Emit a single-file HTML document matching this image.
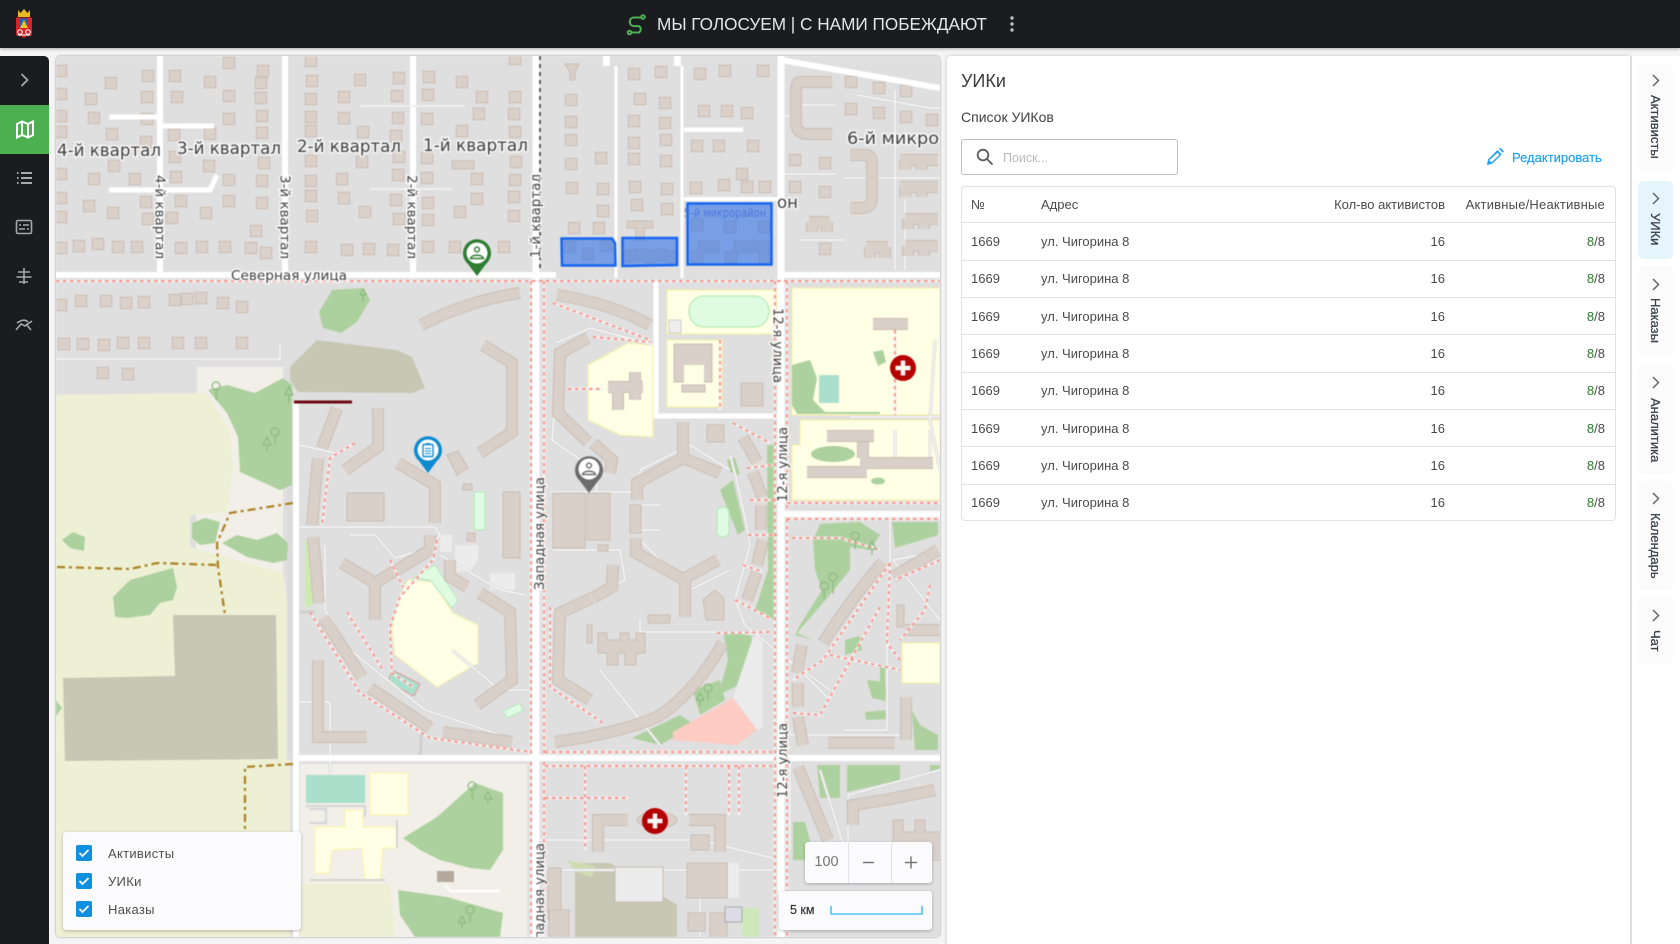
<!DOCTYPE html>
<html lang="ru"><head><meta charset="utf-8"><title>УИКи</title>
<style>
html,body{margin:0;padding:0;width:1680px;height:944px;overflow:hidden;background:#f4f4f4;font-family:"Liberation Sans",sans-serif;color:#444}
.a{position:absolute}
#top{left:0;top:0;width:1680px;height:48px;background:#1a1c1f;box-shadow:0 1px 3px rgba(0,0,0,.3)}
#side{left:0;top:56px;width:49px;height:888px;background:#1a1c1f;border-top-right-radius:5px}
#map{left:56px;top:56px;width:884px;height:881px;overflow:hidden;border-radius:4px;box-shadow:0 0 2px rgba(0,0,0,.4)}
#map svg{display:block;filter:blur(.5px)}
#panel{left:947px;top:56px;width:683px;height:888px;background:#fff;box-shadow:0 0 4px rgba(0,0,0,.18);border-top-left-radius:4px}
#rail{left:1632px;top:56px;width:48px;height:888px;background:#fff;border-left:2px solid #ddd;margin-left:-2px}
.tab{position:absolute;left:1638px;width:35px;background:#fbfbfc;border-radius:5px}
.tt{position:absolute;left:1646px;width:18px;line-height:18px;writing-mode:vertical-rl;font-size:13px;color:#3a4149;-webkit-text-stroke:.25px #3a4149;white-space:nowrap}
.c{position:absolute;font-size:13px;line-height:16px;white-space:nowrap;color:#4a4a4a}
.r{text-align:right}
.ln{position:absolute;left:961px;width:655px;height:1px;background:#e2e2e2}
.cb{position:absolute;left:76px;width:16px;height:16px;background:#0f8fdf;border-radius:2px}
.lg{position:absolute;left:108px;font-size:13px;line-height:18px;color:#4e4e54;letter-spacing:.3px}
.g{color:#2e7d32}
</style></head><body>
<div class="a" id="top"></div>
<svg class="a" style="left:14px;top:8px" width="20" height="32" viewBox="0 0 20 32">
<path d="M4 2l2.500 3L10 1l3.500 4L16 2v7H4z" fill="#e8b923"/>
<path d="M2 9.500h16V26q0 2-2 2h-3l-3 2-3-2H4q-2 0-2-2z" fill="#d8232a"/>
<path d="M6 10.500h8V20H6z" fill="#1d62b5"/><path d="M6 20l4-8 4 8z" fill="#f2c420"/>
<circle cx="6" cy="24" r="2.300" fill="none" stroke="#fff"/><circle cx="14" cy="24" r="2.300" fill="none" stroke="#fff"/><path d="M4 27h12" stroke="#fff"/>
</svg>
<svg class="a" style="left:624px;top:12px" width="24" height="24" viewBox="0 0 24 24" fill="none" stroke="#4caf50" stroke-width="2">
<path d="M17 5.500H10a4.300 4.300 0 0 0 0 8.600h5a3.800 3.800 0 0 1 0 6.400H8"/><circle cx="19" cy="5" r="1.800"/><circle cx="5.500" cy="20.500" r="1.800"/>
</svg>
<div class="a" style="left:657px;top:13px;font-size:17.200px;line-height:22px;color:#e6e6e6;white-space:nowrap">МЫ ГОЛОСУЕМ | С НАМИ ПОБЕЖДАЮТ</div>
<svg class="a" style="left:1008px;top:14px" width="8" height="20" fill="#bdbdbd"><circle cx="4" cy="4" r="1.700"/><circle cx="4" cy="10" r="1.700"/><circle cx="4" cy="16" r="1.700"/></svg>

<div class="a" id="side"></div>
<div class="a" style="left:0;top:105px;width:49px;height:49px;background:#4caf50"></div>
<svg class="a" style="left:0;top:56px" width="49" height="290" viewBox="0 56 49 290" fill="none" stroke="#a8a8a8" stroke-width="1.600">
<path d="M21.500 74l6 6-6 6" stroke-width="1.800"/>
<path d="M17 124l5-2.500 6 2.500 5-2.500v13.500l-5 2.500-6-2.500-5 2.500zM22 121.500V135M28 124v13.500" stroke="#fff" stroke-width="2"/>
<path d="M21 173h11M21 178h11M21 183h11" stroke-width="2"/><path d="M17 173h1.500M17 178h1.500M17 183h1.500" stroke-width="2"/>
<rect x="16.500" y="220.500" width="15" height="13" rx="1.500"/><path d="M19 225h2M23 225h6M19 229h6M27 229h2"/>
<path d="M24 268v16M18 272h12M16.500 277h15M19 282h9"/>
<path d="M16 330l5-6 4 2 7-5M17 323c4-3 8-4 11-1M26 324l5 6"/>
</svg>

<div class="a" id="map">
<svg width="884" height="881" viewBox="56 56 884 881" xmlns="http://www.w3.org/2000/svg">
<defs>
<path id="hs" fill="none" stroke-linecap="square" d="M61 71h.01M61 94h.01M61 116h.01M61 132h.01M61 174h.01M61 198h.01M61 217h.01M61 248h.01M111 83h.01M91 99h.01M94 118h.01M112 134h.01M148 76h.01M147 97h.01M147 119h.01M146 142h.01M114 166h.01M94 179h.01M135 179h.01M89 206h.01M113 213h.01M146 202h.01M148 219h.01M79 246h.01M98 244h.01M118 247h.01M137 247h.01M175 76h.01M210 82h.01M229 63h.01M263 71h.01M261 83h.01M177 97h.01M229 96h.01M261 98h.01M229 119h.01M262 116h.01M174 135h.01M210 134h.01M262 133h.01M175 157h.01M264 163h.01M209 166h.01M176 177h.01M229 180h.01M262 181h.01M181 201h.01M229 201h.01M262 203h.01M206 213h.01M172 218h.01M256 231h.01M181 248h.01M202 247h.01M225 247h.01M251 248h.01M266 253h.01M311 61h.01M312 81h.01M360 80h.01M399 78h.01M311 99h.01M344 97h.01M397 96h.01M311 117h.01M344 118h.01M398 118h.01M311 131h.01M363 132h.01M396 136h.01M311 161h.01M362 162h.01M399 157h.01M311 181h.01M342 179h.01M398 175h.01M311 196h.01M344 198h.01M396 200h.01M312 216h.01M365 212h.01M399 219h.01M311 247h.01M347 250h.01M369 249h.01M393 250h.01M429 77h.01M462 82h.01M515 59h.01M428 95h.01M482 97h.01M515 97h.01M427 119h.01M479 114h.01M514 114h.01M462 131h.01M515 132h.01M427 158h.01M516 162h.01M427 178h.01M477 179h.01M515 180h.01M428 203h.01M477 199h.01M514 197h.01M460 212h.01M428 220h.01M514 216h.01M428 247h.01M455 247h.01M504 247h.01M571 100h.01M571 122h.01M571 140h.01M571 164h.01M601 158h.01M572 188h.01M603 189h.01M603 211h.01M574 228h.01M599 228h.01M634 74h.01M661 72h.01M640 99h.01M665 103h.01M634 121h.01M665 123h.01M634 143h.01M666 140h.01M634 159h.01M666 161h.01M635 187h.01M667 189h.01M637 205h.01M667 209h.01M700 74h.01M725 71h.01M763 71h.01M704 111h.01M727 111h.01M747 113h.01M697 146h.01M719 146h.01M753 146h.01M742 174h.01M696 188h.01M724 185h.01M747 187h.01M765 187h.01M851 82h.01M879 88h.01M906 91h.01M851 109h.01M879 113h.01M906 117h.01M932 120h.01M795 160h.01M825 163h.01M795 187h.01M825 192h.01M825 249h.01M61 305h.01M81 301h.01M106 301h.01M126 303h.01M144 302h.01M175 300h.01M187 299h.01M201 298h.01M223 303h.01M242 307h.01M64 344h.01M83 344h.01M104 345h.01M123 343h.01M144 343h.01M178 343h.01M201 343h.01M242 343h.01M103 373h.01M128 374h.01M570 247h.01M588 254h.01M606 246h.01M630 256h.01M641 255h.01M651 257h.01M661 255h.01M672 257h.01M697 225h.01M730 227h.01M764 227h.01M697 257h.01M704 247h.01M713 247h.01M731 257h.01M740 247h.01M749 247h.01M763 247h.01M765 258h.01"/>
<g id="bd" fill="none">
<path d="M421 325Q470 300 520 293M557 295Q610 303 650 325"/>
<path d="M337 408L322 448M378 408V447L345 470M318 458L312 525M398 463L435 485V523M483 345L512 363V432L480 453M313 537L319 603M342 563L375 583L430 550V535M375 583V620M450 560V577L467 587M480 593L510 612L512 680L477 705M323 618L362 677M318 660V737H367M370 688L430 728M443 732L512 742"/>
<path d="M588 338L560 353L558 413L588 442M593 443L612 460L610 473M608 387H643M635 372V400M618 387V410"/>
<path d="M683 422V458L637 483V500M683 458L720 473M636 538V553L685 580V617M685 578L718 560M743 437L757 462M753 472L762 497M761 505V530M763 540L757 565M757 572L747 600M592 598L560 613L558 680L590 700M613 565L612 587L593 598M723 643Q693 695 657 717Q620 733 555 742"/>
<path d="M883 562Q850 600 823 643M893 577L938 550M802 645L797 673M798 683V707M798 717L803 745M798 767L828 840M853 825V805L885 800L935 790"/>
<path d="M832 82H800Q796 82 796 90V122Q796 134 808 134H832M850 155H866Q872 155 872 165V198Q872 208 862 208H850"/>
<path d="M628 820H598V852M689 820H720V852M873 324H908M827 436H874M863 442V458M860 463H933M807 472H867M900 160H938M905 170V160M922 170V160M900 187H938M905 197V187M922 197V187M905 219H938M908 229V219M924 229V219M866 247H888M870 258V247M885 258V247M905 246H938M908 256V246M924 256V246M809 222H830M812 232V222M827 232V222"/>
<path d="M905 630H940M906 697V740M828 743H895"/>
</g>
</defs>
<rect x="56" y="56" width="884" height="881" fill="#e0dfdf"/>
<!-- west -->
<path d="M197 367H283V770H195Z" fill="#f2efe9"/>
<path d="M56 395L207 393L230 433L233 467L227 513L190 515L190 547L283 573L290 613V937H56Z" fill="#eef0d5"/>
<rect x="287" y="378" width="6" height="382" fill="#dcdcdc"/>
<path d="M173 615H276L278 759L65 761L63 678L175 676Z" fill="#c7c7b4"/>
<path d="M290 367L317 340L397 350L412 357L425 388L413 393L298 392L290 380Z" fill="#c7c7b4"/>
<g fill="#add19e">
<path d="M208 390L227 385L255 393L283 378L292 385V485L280 490L240 472L238 437L227 413Z"/>
<path d="M192 523L205 518L220 522L215 543L200 545L192 538Z"/>
<path d="M222 543L237 535L257 540L277 533L288 543L287 560L273 563L247 557Z"/>
<path d="M62 540L73 532L85 537L84 551L70 548Z"/>
<path d="M113 597L130 580L173 568L177 587L173 600L160 603L150 615L127 618L115 617Z"/>
<path d="M332 290L364 288L370 300L357 322L341 333L323 328L319 312Z"/>
<path d="M56 700L62 708L56 716Z"/>
</g>
<g fill="none" stroke="#ac8327" stroke-width="2.300" stroke-dasharray="8 4 3 4">
<path d="M293 503L230 513L217 543L218 567L225 615"/>
<path d="M57 567L130 569L157 563L217 565"/>
<path d="M293 764L245 767V832"/>
</g>
<!-- south west school -->
<path d="M300 764H527V937H300Z" fill="#f2efe9"/>
<path d="M300 884H390L395 937H300Z" fill="#eef0d5"/>
<rect x="306" y="775" width="59" height="28" fill="#aae0cb"/>
<path d="M370 773H408V815H370ZM315 827H345V810H363V827H397V848H383L380 880H365L362 848L332 850L329 873H315Z" fill="#ffffe5" stroke="#fbf6a6"/>
<path d="M306 806H365V817M310 809H326V823H310M397 820V848M310 880H385" fill="none" stroke="#d4d4d4" stroke-width="2"/>
<g fill="#add19e">
<path d="M403 838L437 817L475 783L503 793V850L490 870L470 868L440 860L420 850Z"/>
<path d="M398 890L447 897L503 913L500 937H415L400 915Z"/>
</g>
<rect x="437" y="871" width="17" height="11" fill="#b5a89d"/>
<path d="M445 885L450 891H500" fill="none" stroke="#fff" stroke-width="2"/>
<!-- fills mid -->
<path d="M408 580L433 582L453 613L478 625V663L437 687L395 655L392 630L398 600Z" fill="#ffffe5" stroke="#f5f0b0"/>
<path d="M413 578L435 565L458 600L452 608L430 580Z" fill="#dffce2" stroke="#b8e8bc"/>
<rect x="474" y="492" width="11" height="38" fill="#e0fbe3" stroke="#aee7b4"/>
<path d="M503 711L520 703L523 711L507 718Z" fill="#e0fbe3" stroke="#aee7b4"/>
<path d="M392 670L420 684L414 696L388 682Z" fill="#aae0cb" stroke="#d99"/>
<path d="M305 540L312 540L322 600L305 608Z" fill="#cdebb0"/>
<path d="M440 535H452V552H440ZM455 545H478V560L470 572H455ZM490 573H515V590H490Z" fill="#ececec"/>
<path d="M588 365L628 343L653 345V437L620 435L588 420Z" fill="#ffffe5" stroke="#f5f0a0"/>
<rect x="667" y="290" width="110" height="44" fill="#ffffe5" stroke="#f5f0a0"/>
<rect x="689" y="296" width="80" height="31" rx="15" fill="#dffce2" stroke="#a8eaa8"/>
<rect x="667" y="340" width="55" height="67" fill="#ffffe5" stroke="#f5f0a0"/>
<rect x="669" y="320" width="12" height="13" fill="#eee" stroke="#ccc"/>
<path d="M792 288H940V415H792Z" fill="#ffffe5" stroke="#f5f0a0"/>
<path d="M800 420H940V500H792V445H800Z" fill="#ffffe5" stroke="#f5f0a0"/>
<path d="M902 643H940V683H902Z" fill="#ffffe5" stroke="#f5f0a0"/>
<g fill="#add19e">
<path d="M792 365L810 360L817 378L813 400L825 412H880V414H815L797 414L792 405Z"/>
<path d="M873 352L883 350L886 362L878 366Z"/><ellipse cx="833" cy="454" rx="22" ry="8"/><ellipse cx="878" cy="481" rx="7" ry="3.500"/>
<path d="M720 490L733 480L745 530L738 535L730 515ZM727 460L735 458L740 475L730 472Z"/>
<path d="M767 445H775V620L755 610L768 570Z"/>
<path d="M723 630L752 636L750 680L718 695L728 660Z"/>
<path d="M693 690L720 680L725 700L700 715Z"/><path d="M632 738L680 715L695 725L660 745Z"/>
<path d="M820 524L860 522L880 535L870 550L850 547V570L823 603L797 633L813 640L795 635L800 625L822 590L815 570L813 540Z"/>
<path d="M892 522H938V535L895 548Z"/>
<path d="M867 680L885 682L889 702L872 698Z"/><path d="M865 712L887 710V719L866 720Z"/>
<path d="M912 710L920 725L938 735V750H915Z"/><path d="M847 765H900V780L847 792Z"/>
<path d="M817 765H840V798H820Z"/><path d="M793 822H805L815 860H793Z"/><path d="M930 765H940V772H930Z"/>
<path d="M845 640L860 636L862 650L845 655Z"/><path d="M880 665H885V685H880Z"/>
</g>
<rect x="717" y="507" width="12" height="30" rx="5" fill="#e0fbe3" stroke="#aee7b4"/>
<rect x="819" y="375" width="20" height="28" fill="#aae0cb"/>
<path d="M733 697L753 637H763V727L757 730Z" fill="#ebebeb"/>
<path d="M673 732L733 698L757 730L737 745L673 740Z" fill="#ffccc4"/>
<path d="M575 863H610L677 905V937H575Z" fill="#c7c7b4"/>
<path d="M567 860L595 866L592 877L575 872Z" fill="#cfdcb2"/>
<rect x="742" y="908" width="17" height="29" fill="#cfe8bb"/>
<!-- service roads (under buildings) -->
<g fill="none" stroke="#cfcfcf" stroke-width="3">
<path d="M56 359H280V345M300 445L335 453M300 527H435L440 535M300 612H315M325 545V610L350 650L425 710L510 738M350 535L375 535L395 558L430 548L440 535M440 555L500 590L525 595M300 702H330V775M422 725L420 760M452 650L500 690L530 690"/>
<path d="M556 343L590 328L655 345M556 393L552 440L595 470L600 520M550 492H640V470L690 445L730 470M640 530H660M640 505H660M640 540L690 590L730 570M553 550H620L625 580L560 610H550M640 620V632H745M745 625L735 600L750 545Q740 490 730 455M745 625L800 670L830 700M600 670L640 720L660 745"/>
<path d="M782 655L830 690M838 630L883 562M920 555L893 560L940 620M790 735H900M890 570L890 520M887 640V730H845M790 760V850M820 770L845 850M848 795L940 770M848 795V850"/>
<path d="M616 66V278M682 66V278M781 116H800M781 174H835M845 240H800M790 105H835M857 95L930 108H940M895 90V270M845 178H940M905 200V270"/>
<path d="M850 417H940M895 430V465H930V430M935 340L930 420L940 470M530 840H700L780 860M535 870H780M700 885V937"/>
</g>
<g fill="none" stroke="#f7f7f7" stroke-width="1.700">
<path d="M56 359H280V345M300 445L335 453M300 527H435L440 535M325 545V610L350 650L425 710L510 738M350 535L375 535L395 558L430 548L440 535M440 555L500 590L525 595M300 702H330V775M452 650L500 690L530 690"/>
<path d="M556 343L590 328L655 345M556 393L552 440L595 470L600 520M550 492H640V470L690 445L730 470M640 530H660M640 505H660M640 540L690 590L730 570M553 550H620L625 580L560 610H550M640 620V632H745M745 625L735 600L750 545Q740 490 730 455M745 625L800 670L830 700M600 670L640 720L660 745"/>
<path d="M782 655L830 690M838 630L883 562M920 555L893 560L940 620M790 735H900M890 570L890 520M887 640V730H845M790 760V850M820 770L845 850M848 795L940 770M848 795V850"/>
<path d="M781 116H800M781 174H835M845 240H800M790 105H835M857 95L930 108H940M895 90V270M845 178H940M905 200V270"/>
<path d="M850 417H940M895 430V465H930V430M935 340L930 420L940 470M530 840H700L780 860M535 870H780M700 885V937"/>
</g>
<path d="M616 66V278M682 66V278" fill="none" stroke="#fff" stroke-width="3"/>
<!-- buildings -->
<use href="#hs" stroke="#c9bdb3" stroke-width="12.500"/>
<use href="#hs" stroke="#dad1ca" stroke-width="10.500"/>
<use href="#bd" stroke="#c9bdb3" stroke-width="12"/>
<use href="#bd" stroke="#d9d0c9" stroke-width="10"/>
<g fill="#d9d0c9" stroke="#c9bdb3">
<rect x="347" y="493" width="37" height="28"/><path d="M447 455L458 451L468 468L457 475Z"/><rect x="463" y="484" width="9" height="6"/><rect x="503" y="492" width="17" height="66"/><rect x="467" y="533" width="8" height="8"/>
<rect x="553" y="493" width="32" height="55"/><rect x="587" y="493" width="23" height="47"/><rect x="598" y="545" width="10" height="6"/>
<rect x="674" y="344" width="38" height="38"/><rect x="682" y="385" width="23" height="7"/><rect x="741" y="383" width="22" height="23"/>
<rect x="707" y="425" width="17" height="17"/><rect x="630" y="505" width="11" height="28"/><path d="M598 633H607V640H620V633H629V640H636V633H645V653H636V665H625V653H618V665H607V653H598Z"/><path d="M703 600L715 590L724 598V620H706Z"/><rect x="648" y="615" width="22" height="8"/><rect x="587" y="625" width="5" height="18"/>
<ellipse cx="657" cy="820" rx="20" ry="8"/><rect x="691" y="835" width="18" height="15"/>
<rect x="548" y="868" width="13" height="52"/><rect x="687" y="863" width="40" height="35"/><rect x="688" y="913" width="17" height="18"/><rect x="710" y="913" width="17" height="24"/>
<rect x="452" y="161" width="22" height="8"/><path d="M893 840V820H903V832H915V820H925V832H940V860H893Z"/>
<rect x="549" y="910" width="20" height="27"/>
<path d="M627 221H653V228H644V240H636V228H627Z"/>
<path d="M565 64H579L575 72V80H570V72Z"/>
<rect x="897" y="605" width="7" height="22"/>
</g>
<rect x="615" y="867" width="48" height="35" fill="#ececec" stroke="#c9bdb3"/>
<rect x="728" y="863" width="11" height="35" fill="#ececec"/>
<rect x="725" y="907" width="17" height="15" fill="#dcdce6" stroke="#aaa"/>
<rect x="684" y="365" width="20" height="18" fill="#ffffe5"/>
<g fill="#fff" stroke="none">
<path d="M684 127.500H743V132H684ZM684 197H781V201H684Z"/>
<rect x="603" y="56" width="7" height="10"/><rect x="674" y="56" width="7" height="10"/>
</g>
<!-- roads -->
<g fill="none" stroke="#fff">
<path d="M160 56V275M285 56V275M413 56V275" stroke-width="6"/>
<path d="M56 275H556" stroke-width="6"/>
<path d="M536 56V937" stroke-width="7"/>
<path d="M781 56V937" stroke-width="7"/>
<path d="M781 60L940 88" stroke-width="6"/>
<path d="M781 275H940" stroke-width="6"/>
<path d="M296 402V937" stroke-width="6"/>
<path d="M296 758H940" stroke-width="6"/>
<path d="M781 514H940" stroke-width="6"/>
<path d="M656 280V416H781" stroke-width="5"/>
<path d="M109 117H160M160 126H214M109 190H210L217 175" stroke-width="5"/>
<path d="M360 106H465M370 189H452" stroke="#efefef" stroke-width="2"/>
</g>
<path d="M294 402H352" stroke="#6b0a0f" stroke-width="3" fill="none"/>
<path d="M540 56V270" stroke="#333" stroke-width="1.500" stroke-dasharray="4 4" fill="none"/>
<!-- footways -->
<g fill="none" stroke="#f4f4f4" stroke-width="3" stroke-opacity=".75">
<path id="f1" d="M56 281H940M531 281V755M544 281V755M775 281V937M787 281V510M787 519V937M787 503H940M787 519H940M531 762V937M544 762V937M545 752H772M545 766H772M585 766V850M545 798H628M686 766V815M729 766V815M739 766V815M550 607V687L603 723M553 303L650 340M593 337L650 342M437 540L433 560L400 597L390 627L392 673L413 687M310 612L360 693L430 738L530 752M355 443L330 458L322 525M390 560L403 587M347 612L383 670M733 423L770 443M747 468L773 465M750 500L775 500M748 535L777 535M743 565L763 572M735 600L770 618M717 633L770 632M792 538L840 538L880 550M890 563L823 660L793 680M890 563L887 643L900 660M830 655L900 670M793 713L820 715L880 607M895 330V415M720 340V410M568 389H603M940 560L895 580M930 585L925 610L900 640"/>
</g>
<use href="#f1" fill="none" stroke="#f8948a" stroke-width="1.900" stroke-dasharray="3.500 3.500"/>
<!-- blue polygons -->
<g fill="#2d6ee9" fill-opacity=".58" stroke="#1565f2" stroke-width="2.500">
<path d="M561.500 238.500H612L615 243L615.500 265.500H562Z"/>
<path d="M622.500 238H677V265L622.500 266Z"/>
<rect x="687.500" y="203.500" width="84" height="61"/>
</g>
<!-- labels -->
<g font-family="'DejaVu Sans','Liberation Sans',sans-serif" fill="#3f3f3f" stroke="#fff" stroke-width="3" stroke-opacity=".75" paint-order="stroke" style="white-space:pre">
<g font-size="16.500">
<text x="57" y="156" textLength="104" lengthAdjust="spacingAndGlyphs">4-й квартал</text>
<text x="177" y="154" textLength="104" lengthAdjust="spacingAndGlyphs">3-й квартал</text>
<text x="297" y="152" textLength="104" lengthAdjust="spacingAndGlyphs">2-й квартал</text>
<text x="423" y="151" textLength="105" lengthAdjust="spacingAndGlyphs">1-й квартал</text>
<text x="847" y="144" textLength="92" lengthAdjust="spacingAndGlyphs">6-й микро</text>
<text x="777" y="208">он</text>
</g>
<g font-size="13.500">
<text x="231" y="280" textLength="116" lengthAdjust="spacingAndGlyphs">Северная улица</text>
<text transform="translate(155.500 175) rotate(90)" textLength="84" lengthAdjust="spacingAndGlyphs">4-й квартал</text>
<text transform="translate(280.500 175) rotate(90)" textLength="84" lengthAdjust="spacingAndGlyphs">3-й квартал</text>
<text transform="translate(407.500 175) rotate(90)" textLength="84" lengthAdjust="spacingAndGlyphs">2-й квартал</text>
<text transform="translate(540 258) rotate(-90)" textLength="84" lengthAdjust="spacingAndGlyphs">1-й квартал</text>
<text transform="translate(544 590) rotate(-90)" textLength="113" lengthAdjust="spacingAndGlyphs">Западная улица</text>
<text transform="translate(544 956) rotate(-90)" textLength="113" lengthAdjust="spacingAndGlyphs">Западная улица</text>
<text transform="translate(773.500 308) rotate(90)" textLength="75" lengthAdjust="spacingAndGlyphs">12-я улица</text>
<text transform="translate(787 502) rotate(-90)" textLength="75" lengthAdjust="spacingAndGlyphs">12-я улица</text>
<text transform="translate(787 798) rotate(-90)" textLength="75" lengthAdjust="spacingAndGlyphs">12-я улица</text>
</g>
</g>
<text x="684" y="217" font-family="'DejaVu Sans',sans-serif" font-size="12" fill="#4a78dd" textLength="82" lengthAdjust="spacingAndGlyphs">5-й микрорайон</text>
<!-- trees -->
<g fill="none" stroke="#8fb880" stroke-width="1.200">
<path d="M216 390a4 4 0 1 1 .1 0v10M285 395l4-8 4 8h-8M289 395v8M263 445l4-8 4 8h-8M267 445v6M275 436a4 4 0 1 1 .1 0v9M360 295l3-6 3 6h-6M363 295v7M855 540a4 4 0 1 1 .1 0v9M868 549l4-8 4 8h-8M872 549v6M824 590a4 4 0 1 1 .1 0v9M833 581a4 4 0 1 1 .1 0v13M696 700l4-7 4 7h-8M700 700v6M708 692a4 4 0 1 1 .1 0v8M472 790a4 4 0 1 1 .1 0v9M484 799l4-7 4 7h-8M488 799v5M458 923l4-7 4 7h-8M462 923v6M470 914a4 4 0 1 1 .1 0v9"/>
</g>
<!-- crosses -->
<g>
<circle cx="903" cy="368" r="13" fill="#b50000"/><path d="M903 360.500v15M895.500 368h15" stroke="#f5f5f5" stroke-width="4.500"/>
<circle cx="655" cy="821" r="13" fill="#b50000"/><path d="M655 813.500v15M647.500 821h15" stroke="#f5f5f5" stroke-width="4.500"/>
</g>
<!-- pins -->
<g>
<path d="M477 276L468 264A14 14 0 1 1 486 264Z" fill="#2e7d32"/><circle cx="477" cy="253" r="10.500" fill="#fff"/>
<circle cx="477" cy="249.500" r="2.400" fill="none" stroke="#2e7d32" stroke-width="1.400"/><path d="M470.500 258.500c1-4.500 12-4.500 13 0z" fill="none" stroke="#2e7d32" stroke-width="1.400"/>
<path d="M428 473L419 461A14 14 0 1 1 437 461Z" fill="#0f8ad0"/><circle cx="428" cy="450" r="10.500" fill="#fff"/>
<rect x="423" y="444.500" width="10" height="12" rx="1" fill="none" stroke="#0f8ad0" stroke-width="1.400"/><path d="M425 448.500h6M425 451h6M425 453.500h6M426 443.500h4" stroke="#0f8ad0" stroke-width="1"/>
<path d="M589 493L580 481A14 14 0 1 1 598 481Z" fill="#6c6c6c"/><circle cx="589" cy="469" r="10.500" fill="#fff"/>
<circle cx="589" cy="465.500" r="2.400" fill="none" stroke="#6c6c6c" stroke-width="1.400"/><path d="M582.500 474.500c1-4.500 12-4.500 13 0z" fill="none" stroke="#6c6c6c" stroke-width="1.400"/>
</g>
</svg>
</div>

<!-- legend -->
<div class="a" style="left:63px;top:832px;width:238px;height:98px;background:#fbfbfd;border-radius:3px;box-shadow:0 1px 3px rgba(0,0,0,.25)"></div>
<div class="cb" style="top:845px"><svg width="16" height="16" fill="none" stroke="#fff" stroke-width="1.800"><path d="M3.500 8l3 3 6-6"/></svg></div>
<div class="cb" style="top:873px"><svg width="16" height="16" fill="none" stroke="#fff" stroke-width="1.800"><path d="M3.500 8l3 3 6-6"/></svg></div>
<div class="cb" style="top:901px"><svg width="16" height="16" fill="none" stroke="#fff" stroke-width="1.800"><path d="M3.500 8l3 3 6-6"/></svg></div>
<div class="lg" style="top:845px">Активисты</div>
<div class="lg" style="top:873px">УИКи</div>
<div class="lg" style="top:901px">Наказы</div>

<!-- zoom ctrl -->
<div class="a" style="left:805px;top:842px;width:127px;height:41px;background:#fbfbfd;border-radius:3px;box-shadow:0 1px 3px rgba(0,0,0,.25)"></div>
<div class="a" style="left:848px;top:842px;width:1px;height:41px;background:#e4e4e4"></div>
<div class="a" style="left:891px;top:842px;width:1px;height:41px;background:#e4e4e4"></div>
<div class="a" style="left:805px;top:853px;width:43px;text-align:center;font-size:14.500px;line-height:18px;color:#777">100</div>
<svg class="a" style="left:805px;top:842px" width="127" height="41" fill="none" stroke="#777" stroke-width="1.500"><path d="M58 20.500h11M100 20.500h12M106 14.500v12"/></svg>
<!-- scale -->
<div class="a" style="left:779px;top:891px;width:153px;height:39px;background:#fbfbfd;border-radius:3px;box-shadow:0 1px 3px rgba(0,0,0,.25)"></div>
<div class="a" style="left:790px;top:902px;font-size:12.500px;line-height:16px;color:#333;-webkit-text-stroke:.2px #333">5 км</div>
<svg class="a" style="left:829px;top:905px" width="96" height="11" fill="none" stroke="#4fc3f7" stroke-width="1.600"><path d="M2 1v8h91V1"/></svg>

<!-- panel -->
<div class="a" id="panel"></div>
<div class="a" style="left:961px;top:70px;font-size:18px;line-height:22px;color:#3c3c3c">УИКи</div>
<div class="a" style="left:961px;top:108px;font-size:14px;line-height:18px;color:#424242">Список УИКов</div>
<div class="a" style="left:961px;top:139px;width:215px;height:34px;border:1.500px solid #bdbdbd;border-radius:3px;background:#fff"></div>
<svg class="a" style="left:975px;top:147px" width="20" height="20" fill="none" stroke="#5a5a5a" stroke-width="1.800"><circle cx="8" cy="8" r="5.300"/><path d="M12 12l5.500 5.500"/></svg>
<div class="a" style="left:1003px;top:150px;font-size:12.500px;line-height:16px;color:#b9b9b9">Поиск...</div>
<svg class="a" style="left:1485px;top:147px" width="20" height="20" fill="#1da1f2"><path d="M2 18l1-5.500L12.500 3l4.200 4.200L7.300 16.800zM4.300 13.300l2.200 2.300 8-8-2-2zM14 1.800l1.200-1.200 3.700 3.700-1.200 1.300z"/></svg>
<div class="a" style="left:1512px;top:150px;font-size:13px;line-height:16px;color:#1fa3ee;-webkit-text-stroke:.2px #1fa3ee;white-space:nowrap">Редактировать</div>

<div class="a" style="left:961px;top:186px;width:653px;height:333px;border:1px solid #e2e2e2;border-radius:4px"></div>
<div class="ln" style="top:222px"></div><div class="ln" style="top:260px"></div><div class="ln" style="top:297px"></div><div class="ln" style="top:334px"></div><div class="ln" style="top:372px"></div><div class="ln" style="top:409px"></div><div class="ln" style="top:446px"></div><div class="ln" style="top:484px"></div>

<div class="c" style="left:971px;top:197px">№</div><div class="c" style="left:1041px;top:197px">Адрес</div>
<div class="c r" style="right:235px;top:197px">Кол-во активистов</div><div class="c r" style="right:75px;top:197px;letter-spacing:.2px">Активные/Неактивные</div>

<div class="c" style="left:971px;top:234px">1669</div><div class="c" style="left:1041px;top:234px">ул. Чигорина 8</div><div class="c r" style="right:235px;top:234px">16</div><div class="c r" style="right:75px;top:234px"><span class="g">8</span>/8</div>
<div class="c" style="left:971px;top:271px">1669</div><div class="c" style="left:1041px;top:271px">ул. Чигорина 8</div><div class="c r" style="right:235px;top:271px">16</div><div class="c r" style="right:75px;top:271px"><span class="g">8</span>/8</div>
<div class="c" style="left:971px;top:309px">1669</div><div class="c" style="left:1041px;top:309px">ул. Чигорина 8</div><div class="c r" style="right:235px;top:309px">16</div><div class="c r" style="right:75px;top:309px"><span class="g">8</span>/8</div>
<div class="c" style="left:971px;top:346px">1669</div><div class="c" style="left:1041px;top:346px">ул. Чигорина 8</div><div class="c r" style="right:235px;top:346px">16</div><div class="c r" style="right:75px;top:346px"><span class="g">8</span>/8</div>
<div class="c" style="left:971px;top:383px">1669</div><div class="c" style="left:1041px;top:383px">ул. Чигорина 8</div><div class="c r" style="right:235px;top:383px">16</div><div class="c r" style="right:75px;top:383px"><span class="g">8</span>/8</div>
<div class="c" style="left:971px;top:421px">1669</div><div class="c" style="left:1041px;top:421px">ул. Чигорина 8</div><div class="c r" style="right:235px;top:421px">16</div><div class="c r" style="right:75px;top:421px"><span class="g">8</span>/8</div>
<div class="c" style="left:971px;top:458px">1669</div><div class="c" style="left:1041px;top:458px">ул. Чигорина 8</div><div class="c r" style="right:235px;top:458px">16</div><div class="c r" style="right:75px;top:458px"><span class="g">8</span>/8</div>
<div class="c" style="left:971px;top:495px">1669</div><div class="c" style="left:1041px;top:495px">ул. Чигорина 8</div><div class="c r" style="right:235px;top:495px">16</div><div class="c r" style="right:75px;top:495px"><span class="g">8</span>/8</div>

<!-- rail -->
<div class="a" id="rail"></div>
<div class="tab" style="top:63px;height:110px"></div>
<div class="tab" style="top:181px;height:78px;background:#e6f4fd"></div>
<div class="tab" style="top:266px;height:91px"></div>
<div class="tab" style="top:365px;height:109px"></div>
<div class="tab" style="top:481px;height:109px"></div>
<div class="tab" style="top:597px;height:68px"></div>
<svg class="a" style="left:1650px;top:56px" width="12" height="570" fill="none" stroke="#666" stroke-width="1.500"><path d="M3 19l5.500 5.500L3 30M3 137l5.500 5.500L3 148M3 223l5.500 5.500L3 234M3 321l5.500 5.500L3 332M3 437l5.500 5.500L3 448M3 554l5.500 5.500L3 565"/></svg>
<div class="tt" style="top:95px">Активисты</div>
<div class="tt" style="top:213px">УИКи</div>
<div class="tt" style="top:298px">Наказы</div>
<div class="tt" style="top:398px">Аналитика</div>
<div class="tt" style="top:513px">Календарь</div>
<div class="tt" style="top:630px">Чат</div>
</body></html>
